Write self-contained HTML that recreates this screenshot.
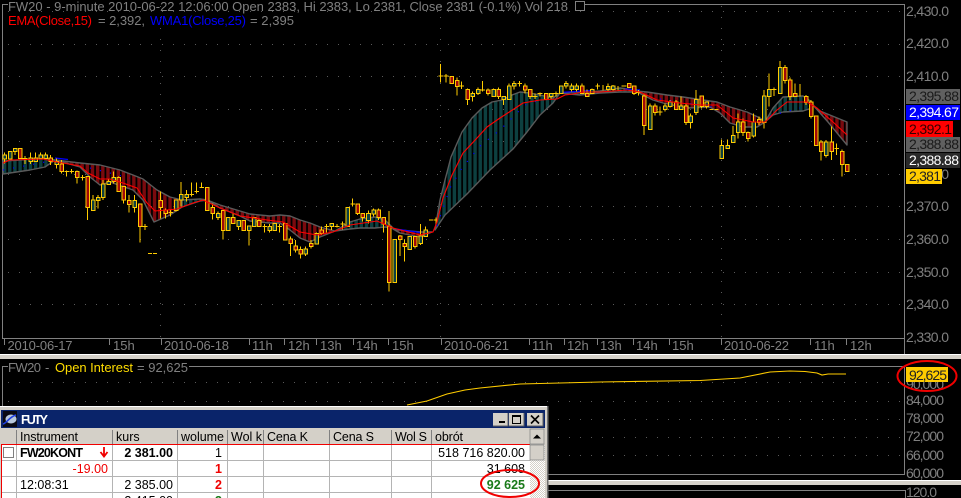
<!DOCTYPE html>
<html><head><meta charset="utf-8"><style>
html,body{margin:0;padding:0;background:#000;width:961px;height:498px;overflow:hidden}
svg{display:block;font-family:"Liberation Sans",Arial,sans-serif}
.a{fill:#808080;font-size:14px}
.t{fill:#808080;font-size:13px}
.b{fill:#000;font-size:12.5px}
.w{fill:none;stroke:#ffcc00;stroke-width:3.2}
.u{fill:#0e4040;stroke:#ffcc00;stroke-width:3.2}
.d{fill:#a00808;stroke:#ffcc00;stroke-width:3.2}
</style></head><body>
<svg width="961" height="498" viewBox="0 0 961 498" xmlns="http://www.w3.org/2000/svg">
<defs>
<clipPath id="ct"><path d="M3 161L20 160L45 158L55 160L45 167L30 170L3 174ZM182 200L200 199L207 200L200 201L182 207ZM335 231L350 222L360 219L375 217L385 220L393 228L385 227L375 228L360 228L350 229ZM435 230L440 200L445 180L451 157L462 132L472 118L482 108L492 102L502 100L512 95L520 92L530 93L540 95L553 98L560 93L553 103L540 115L527 132L513 149L490 170L467 194L445 215ZM560 93L575 92L590 92L600 91L620 88L635 90L635 92L620 92L600 93L580 95ZM765 122L773 108L783 97L803 96L813 103L812 108L803 111L783 112L773 115Z"/></clipPath>
<clipPath id="cr"><path d="M55 160L80 163L100 165L120 170L133 175L143 179L157 190L170 197L182 200L182 207L170 215L154 222L143 200L133 190L110 182L100 185L90 177L80 167ZM207 200L220 205L240 211L250 214L270 216L280 215L290 216L300 220L310 223L320 227L335 231L320 237L310 242L300 238L290 230L280 223L270 223L250 221L240 216L220 208ZM393 229L400 230L420 232L432 232L420 237L400 233ZM635 91L647 92L667 95L683 97L703 100L717 102L730 107L747 112L760 118L765 122L757 127L743 127L730 123L720 113L710 107L687 108L663 103L653 100ZM813 105L820 111L847 122L847 145L828 122Z"/></clipPath>
<pattern id="ck" width="2" height="2" patternUnits="userSpaceOnUse"><rect width="2" height="2" fill="#fff"/><rect width="1" height="1" fill="#d4d0c8"/><rect x="1" y="1" width="1" height="1" fill="#d4d0c8"/></pattern>
</defs>
<rect width="961" height="498" fill="#000"/>

<!-- grid -->
<g stroke="#5a5a5a" stroke-width="1" stroke-dasharray="1 10" fill="none" shape-rendering="crispEdges">
<path d="M8 11.5H904M8 44.5H904M8 76.5H904M8 109.5H904M8 141.5H904M8 174.5H904M8 206.5H904M8 239.5H904M8 272.5H904M8 304.5H904"/>
<path d="M160.5 6V338M440.5 6V338M721.5 6V338"/>
<path d="M8 382.5H904M8 401.5H904M8 419.5H904M8 437.5H904M8 455.5H904"/>
</g>

<!-- main frame -->
<g stroke="#808080" fill="none" shape-rendering="crispEdges">
<path d="M8 4.5H2.5V338.5H904.5M585 4.5H904.5V354"/>
<rect x="575.5" y="1.5" width="9" height="9"/>
<path d="M8 366.5H2.5V407M189 366.5H904.5V474.5H548"/>
<path d="M548 490.5H905.5V498"/>
<path d="M4.5 339V345M109.5 339V345M161.5 339V345M249.5 339V345M284.5 339V345M316.5 339V345M353.5 339V345M388.5 339V345M441.5 339V345M529.5 339V345M564.5 339V345M597.5 339V345M633.5 339V345M669.5 339V345M721.5 339V345M810.5 339V345M846.5 339V345"/>
</g>

<!-- bands: striped fill -->
<path clip-path="url(#ct)" d="M2.9 150H850" fill="none" stroke="#0d4040" stroke-width="300" stroke-dasharray="3.4 1.77"/>
<path clip-path="url(#cr)" d="M2.9 150H850" fill="none" stroke="#7a0a0e" stroke-width="300" stroke-dasharray="3.4 1.77"/>
<!-- bands: outlines -->
<g stroke="#5a5a5a" stroke-width="1.4" stroke-linejoin="round" fill="none">
<path d="M3 161L20 160L45 158L55 160L45 167L30 170L3 174Z"/>
<path d="M55 160L80 163L100 165L120 170L133 175L143 179L157 190L170 197L182 200L182 207L170 215L154 222L143 200L133 190L110 182L100 185L90 177L80 167Z"/>
<path d="M182 200L200 199L207 200L200 201L182 207Z"/>
<path d="M207 200L220 205L240 211L250 214L270 216L280 215L290 216L300 220L310 223L320 227L335 231L320 237L310 242L300 238L290 230L280 223L270 223L250 221L240 216L220 208Z"/>
<path d="M335 231L350 222L360 219L375 217L385 220L393 228L385 227L375 228L360 228L350 229Z"/>
<path d="M393 229L400 230L420 232L432 232L420 237L400 233Z"/>
<path d="M435 230L440 200L445 180L451 157L462 132L472 118L482 108L492 102L502 100L512 95L520 92L530 93L540 95L553 98L560 93L553 103L540 115L527 132L513 149L490 170L467 194L445 215Z"/>
<path d="M560 93L575 92L590 92L600 91L620 88L635 90L635 92L620 92L600 93L580 95Z"/>
<path d="M635 91L647 92L667 95L683 97L703 100L717 102L730 107L747 112L760 118L765 122L757 127L743 127L730 123L720 113L710 107L687 108L663 103L653 100Z"/>
<path d="M765 122L773 108L783 97L803 96L813 103L812 108L803 111L783 112L773 115Z"/>
<path d="M813 105L820 111L847 122L847 145L828 122Z"/>
</g>

<!-- blue WMA -->
<path fill="none" stroke="#0000ff" stroke-width="1.2" d="M55 158L68 159.5M396 229L420 232.5M560 92.5L590 90.5M625 89L640 90"/>
<path fill="none" stroke="#0000ff" stroke-width="1.2" stroke-dasharray="1.2 9" d="M3 170L45 162M90 168L130 178M437 226L450 188L462 168L480 146L500 130L525 105L540 100M660 99L720 108M770 116L800 108"/>

<!-- candles -->
<g shape-rendering="crispEdges">
<g transform="translate(0,140) scale(.3333)">
<path class="w" d="M14 37V70M45 25V45M75 48V72M68 55h14M92 37V72M107 37V65M122 37V55M137 37V55M152 45V75M170 55V85M185 60V100M200 92V110M193 95h14M215 87V100M208 95h14M231 92V130M248 105V122M241 112h14M263 110V240M279 165V210M294 165V205M309 120V180M326 115V135M341 95V130M356 110V155M371 140V190M387 165V218M404 165V218M420 190V308M435 252V270M428 260h14M444 340h12M459 340h12M482 155V235M497 205V235M512 210V230M505 218h14M528 180V215M543 126V200M560 150V185M575 127V170M568 163h14M590 127V160M583 155h14M605 127V142M598 142h14M638 190V238M654 215V240"/>
<path class="u" d="M9 45h11v12h-11zM25 35h11v22h-11zM40 25h11v10h-11zM87 54h11v11h-11zM102 54h11v11h-11zM117 45h11v10h-11zM132 45h11v10h-11zM165 65h11v8h-11zM274 180h11v32h-11zM289 172h11v10h-11zM304 132h11v40h-11zM321 124h11v10h-11zM336 112h11v13h-11zM399 181h11v22h-11zM523 180h11v32h-11zM538 163h11v17h-11zM555 163h11v10h-11zM649 220h11v12h-11z"/>
<path class="d" d="M55 25h11v31h-11zM147 54h11v11h-11zM180 72h11v23h-11zM226 95h11v17h-11zM258 110h11v93h-11zM351 112h11v43h-11zM366 140h11v40h-11zM382 181h11v12h-11zM415 192h11v68h-11zM477 181h11v22h-11zM492 210h11v10h-11zM616 142h11v70h-11zM633 203h11v17h-11z"/>
</g>
<g transform="translate(200,180) scale(.3333)">
<path class="w" d="M69 90V178M99 100V132M116 120V150M131 120V152M147 138V197M177 115V140M194 132V158M187 140h14M209 132V158M239 132V158M232 140h14M272 170V228M287 180V218M302 200V236M317 200V228M333 180V205M350 158V192M365 140V165M380 132V158M373 140h14M395 130V150M411 132V142M404 140h14M428 124V148M421 132h14M458 55V80M451 72h14M473 72V105M488 100V125M505 92V130M521 85V110M536 85V120M551 112V158M567 93V335M600 165V228M614 178V245M629 168V210M645 168V205M662 132V195M677 140V170M687 120h14M702 120h12M708 112V130"/>
<path class="u" d="M79 112h11v40h-11zM111 122h11v18h-11zM142 138h11v14h-11zM157 112h11v28h-11zM204 140h11v12h-11zM219 130h11v22h-11zM312 207h11v15h-11zM345 160h11v32h-11zM390 130h11v10h-11zM438 82h11v58h-11zM500 100h11v22h-11zM516 90h11v12h-11zM579 178h11v130h-11zM624 170h11v38h-11zM657 168h11v22h-11zM672 150h11v20h-11z"/>
<path class="d" d="M64 92h11v60h-11zM94 112h11v18h-11zM126 122h11v30h-11zM172 122h11v18h-11zM250 130h11v50h-11zM267 177h11v13h-11zM282 198h11v12h-11zM297 208h11v14h-11zM328 190h11v10h-11zM360 150h11v10h-11zM468 72h11v28h-11zM483 100h11v13h-11zM531 90h11v22h-11zM546 112h11v20h-11zM562 140h11v168h-11zM595 168h11v10h-11zM609 190h11v10h-11zM640 170h11v30h-11z"/>
</g>
<g transform="translate(380,50) scale(.3333)">
<path class="w" d="M182 42V97M175 78h14M198 72V97M191 78h14M231 82V137M245 95V117M238 108h14M263 115V165M278 125V155M294 112V135M308 93V125M301 120h14M324 115V137M341 115V140M356 112V147M371 140V165M387 100V150M402 93V118M419 93V110M412 100h14M435 100V130M450 118V147M465 130V147M458 140h14M480 128V140M473 130h14M513 130V147M528 125V140M521 130h14M558 93V115M575 100V125M590 100V125M606 100V130M621 118V140M636 115V132M653 100V118M646 108h14M669 105V122M684 100V125M699 105V125M714 108V122"/>
<path class="u" d="M273 130h11v10h-11zM289 118h11v12h-11zM336 118h11v22h-11zM366 140h11v8h-11zM382 108h11v40h-11zM397 100h11v8h-11zM508 130h11v10h-11zM538 108h11v22h-11zM553 100h11v8h-11zM570 108h11v10h-11zM585 108h11v10h-11zM631 118h11v12h-11zM679 110h11v8h-11zM694 108h11v10h-11z"/>
<path class="d" d="M210 80h11v20h-11zM226 92h11v18h-11zM258 118h11v30h-11zM319 120h11v10h-11zM351 118h11v22h-11zM430 108h11v12h-11zM445 118h11v22h-11zM493 130h11v18h-11zM601 108h11v22h-11zM616 130h11v10h-11z"/>
</g>
<g transform="translate(620,50) scale(.3333)">
<path class="w" d="M5 108h14M42 108V135M56 120V137M49 128h14M72 130V255M90 160V240M105 160V197M120 170V197M113 186h14M135 160V185M150 150V172M168 150V180M183 140V180M198 160V225M212 190V235M228 120V195M245 138V175M260 155V175M268 178h12M283 178h12M305 268V325M323 268V295M339 228V278M354 190V265M369 205V258M384 245V275M401 190V262M417 200V225M432 120V235M447 70V170M462 112V138M455 118h14M480 33V130M495 45V100M510 82V150M525 100V140M540 102V140M558 135V165M573 150V205M603 270V332M618 270V322M635 230V330M650 280V315M643 295h14M666 298V380"/>
<path class="u" d="M85 168h11v70h-11zM130 168h11v10h-11zM145 156h11v14h-11zM178 168h11v10h-11zM207 198h11v20h-11zM223 148h11v40h-11zM255 156h11v14h-11zM300 287h11v38h-11zM318 287h11v8h-11zM334 256h11v22h-11zM349 216h11v32h-11zM396 216h11v42h-11zM427 138h11v80h-11zM442 118h11v22h-11zM475 52h11v78h-11zM613 276h11v40h-11z"/>
<path class="d" d="M22 100h11v12h-11zM37 108h11v22h-11zM67 138h11v88h-11zM100 168h11v20h-11zM163 156h11v22h-11zM193 168h11v50h-11zM240 138h11v32h-11zM364 216h11v32h-11zM379 247h11v19h-11zM412 208h11v10h-11zM490 52h11v40h-11zM505 90h11v50h-11zM520 130h11v10h-11zM553 140h11v18h-11zM568 156h11v44h-11zM583 198h11v88h-11zM598 276h11v28h-11zM630 276h11v28h-11zM661 305h11v38h-11zM676 343h11v22h-11z"/>
</g>
</g>

<!-- red EMA -->
<path fill="none" stroke="#ff0000" stroke-width="1.1" stroke-linejoin="round" d="M3 163L10 160L43 159L57 162L80 166L88 173L100 179L110 179L123 183L137 188L147 203L155 211L177 209L193 203L203 200L220 208L240 216L267 220L283 222L300 232L317 235L333 232L350 225L377 221L393 228L420 235L433 232L437 222L443 198L452 175L463 153L477 138L487 127L500 118L517 107L523 103L540 100L557 99L565 95L573 94L583 92L600 92L627 90L640 92L657 100L680 103L700 105L717 105L727 113L733 118L753 122L765 122L777 110L787 102L807 102L817 108L833 122L847 135"/>

<!-- headings -->
<text x="8" y="11" class="t" textLength="560" lengthAdjust="spacing">FW20 - 9-minute 2010-06-22 12:06:00 Open 2383, Hi 2383, Lo 2381, Close 2381 (-0.1%) Vol 218</text>
<text x="8" y="25" class="t" style="fill:#ff0000" textLength="84">EMA(Close,15)</text>
<text x="98" y="25" class="t" textLength="47">= 2,392,</text>
<text x="150" y="25" class="t" style="fill:#0000ff" textLength="96">WMA1(Close,25)</text>
<text x="250" y="25" class="t" textLength="44">= 2,395</text>

<!-- price axis -->
<g class="a">
<text x="906" y="16" textLength="43">2,430.0</text>
<text x="906" y="48" textLength="43">2,420.0</text>
<text x="906" y="81" textLength="43">2,410.0</text>
<text x="906" y="179" textLength="43">2,380.0</text>
<text x="906" y="211" textLength="43">2,370.0</text>
<text x="906" y="244" textLength="43">2,360.0</text>
<text x="906" y="277" textLength="43">2,350.0</text>
<text x="906" y="309" textLength="43">2,340.0</text>
<text x="906" y="342" textLength="43">2,330.0</text>
</g>
<g font-size="14">
<rect x="906" y="89" width="54" height="15" fill="#606060"/><text x="909" y="101" fill="#1a1a1a" textLength="50">2,395.88</text>
<rect x="906" y="105" width="54" height="15" fill="#0000ff"/><text x="909" y="117" fill="#fff" textLength="50">2,394.67</text>
<rect x="906" y="121" width="47" height="16" fill="#ff0000"/><text x="909" y="134" fill="#300" textLength="43">2,392.1</text>
<rect x="906" y="137" width="54" height="15" fill="#606060"/><text x="909" y="149" fill="#1a1a1a" textLength="50">2,388.88</text>
<rect x="906" y="153" width="54" height="15" fill="#2a2a2a"/><text x="909" y="165" fill="#fff" textLength="50">2,388.88</text>
<rect x="906" y="169" width="36" height="15" fill="#ffcc00"/><text x="909" y="181" fill="#222" textLength="32">2,381</text>
</g>

<!-- time axis -->
<g class="t" font-size="13">
<text x="7.5" y="350" textLength="65">2010-06-17</text>
<text x="113" y="350">15h</text>
<text x="164" y="350" textLength="65">2010-06-18</text>
<text x="252" y="350">11h</text>
<text x="288" y="350">12h</text>
<text x="320" y="350">13h</text>
<text x="356" y="350">14h</text>
<text x="392" y="350">15h</text>
<text x="444" y="350" textLength="65">2010-06-21</text>
<text x="532" y="350">11h</text>
<text x="567" y="350">12h</text>
<text x="600" y="350">13h</text>
<text x="636" y="350">14h</text>
<text x="672" y="350">15h</text>
<text x="724" y="350" textLength="65">2010-06-22</text>
<text x="814" y="350">11h</text>
<text x="850" y="350">12h</text>
</g>

<!-- separators -->
<rect x="0" y="354" width="961" height="5" fill="#d4d0c8"/><rect x="0" y="354" width="961" height="1" fill="#fff"/>
<rect x="548" y="480" width="413" height="5" fill="#d4d0c8"/><rect x="548" y="480" width="413" height="1" fill="#fff"/>

<!-- OI panel -->
<text x="8" y="372" class="t" textLength="33">FW20</text>
<text x="45" y="372" class="t">-</text>
<text x="55" y="372" class="t" style="fill:#ffdd00" textLength="78">Open Interest</text>
<text x="137" y="372" class="t" textLength="51">= 92,625</text>
<path fill="none" stroke="#ffcc00" stroke-width="1.1" d="M407 405L427 401L447 394L465 390L480 388L520 384L600 382L700 380.5L740 378L770 372L790 371L805 371.5L817 373L822 375L828 374L846 374"/>
<g class="a">
<text x="906" y="389" textLength="38">90,000</text>
<text x="906" y="405" textLength="38">84,000</text>
<text x="906" y="423" textLength="38">78,000</text>
<text x="906" y="441" textLength="38">72,000</text>
<text x="906" y="460" textLength="38">66,000</text>
<text x="906" y="478" textLength="38">60,000</text>
<text x="906" y="497" textLength="31">120.0</text>
</g>
<rect x="906" y="367" width="42" height="15" fill="#ffcc00"/>
<text x="909" y="380" font-size="14" fill="#222" textLength="38">92,625</text>
<ellipse cx="927" cy="376" rx="29.5" ry="15" fill="none" stroke="#f00000" stroke-width="2"/>

<!-- window -->
<rect x="0" y="406" width="548" height="92" fill="#d4d0c8"/>
<rect x="0" y="406" width="548" height="1" fill="#fff"/>
<rect x="547" y="406" width="1.5" height="92" fill="#707070"/>
<rect x="1" y="410" width="544" height="18" fill="#0a246a"/>
<rect x="3" y="411" width="14" height="16" fill="#0a0a14"/>
<ellipse cx="11" cy="419" rx="5.5" ry="4.5" fill="#b8c8dc"/>
<path d="M3 424C7 423 9 417 16 415" fill="none" stroke="#2040e0" stroke-width="1.5"/>
<text x="21" y="424" font-size="12.5" font-weight="bold" fill="#fff" textLength="27">FUTY</text>
<g shape-rendering="crispEdges">
<rect x="493" y="413" width="15" height="13" fill="#d4d0c8"/><rect x="499" y="421" width="6" height="2" fill="#000"/>
<rect x="509" y="413" width="15" height="13" fill="#d4d0c8"/><rect x="512.5" y="415.5" width="8" height="8" fill="none" stroke="#000"/><rect x="512" y="415" width="9" height="2" fill="#000"/>
<rect x="527" y="413" width="16" height="13" fill="#d4d0c8"/>
<path d="M531 415.5L539 423.5M539 415.5L531 423.5" stroke="#000" stroke-width="1.6" fill="none" shape-rendering="auto"/>
<path d="M493 426H508V413M509 426H524V413M527 426H543V413" fill="none" stroke="#606060"/>
</g>

<!-- table -->
<rect x="2" y="444" width="528" height="54" fill="#fff"/>
<rect x="530" y="445" width="15" height="53" fill="url(#ck)"/>
<g shape-rendering="crispEdges" fill="none">
<path stroke="#b4b4b4" d="M2 460.5H530M2 476.5H530M2 492.5H530M16.5 445V498M112.5 445V498M177.5 445V498M227.5 445V498M263.5 445V498M329.5 445V498M391.5 445V498M431.5 445V498"/>
<path stroke="#808080" d="M16.5 430V444M112.5 430V444M177.5 430V444M227.5 430V444M263.5 430V444M329.5 430V444M391.5 430V444M431.5 430V444"/>
<path stroke="#f00000" d="M1.5 498V444.5H530"/>
<rect x="3.5" y="447.5" width="10" height="10" fill="#fff" stroke="#808080"/>
</g>
<rect x="530" y="429" width="14" height="15" fill="#d4d0c8" stroke="#808080" stroke-width=".7"/>
<path d="M533 438.5h8l-4-4z" fill="#000"/>
<rect x="530" y="445" width="14" height="15" fill="#d4d0c8" stroke="#808080" stroke-width=".7"/>
<g class="b">
<text x="20" y="441" textLength="58">Instrument</text>
<text x="116" y="441">kurs</text>
<text x="181" y="441" textLength="43">wolume</text>
<text x="231" y="441" textLength="31">Wol k</text>
<text x="267" y="441" textLength="41">Cena K</text>
<text x="333" y="441" textLength="41">Cena S</text>
<text x="395" y="441" textLength="32">Wol S</text>
<text x="435" y="441" textLength="28">obrót</text>
<text x="20" y="457" font-weight="bold" textLength="63">FW20KONT</text>
<text x="173" y="457" font-weight="bold" text-anchor="end">2 381.00</text>
<text x="222" y="457" text-anchor="end">1</text>
<text x="525" y="457" text-anchor="end">518 716 820.00</text>
<text x="108" y="473" text-anchor="end" style="fill:#f00000">-19.00</text>
<text x="222" y="473" text-anchor="end" font-weight="bold" style="fill:#f00000">1</text>
<text x="525" y="473" text-anchor="end">31 608</text>
<text x="20" y="489">12:08:31</text>
<text x="173" y="489" text-anchor="end">2 385.00</text>
<text x="222" y="489" text-anchor="end" font-weight="bold" style="fill:#f00000">2</text>
<text x="525" y="489" text-anchor="end" font-weight="bold" style="fill:#1a7a1a">92 625</text>
<text x="173" y="505" text-anchor="end">2 415.00</text>
<text x="222" y="505" text-anchor="end" font-weight="bold" style="fill:#1a7a1a">3</text>
</g>
<path d="M104 447V456M100.5 452L104 456.5L107.5 452" fill="none" stroke="#f00000" stroke-width="1.8"/>
<ellipse cx="510" cy="483.5" rx="29" ry="13.5" fill="none" stroke="#f00000" stroke-width="2"/>
</svg>
</body></html>
